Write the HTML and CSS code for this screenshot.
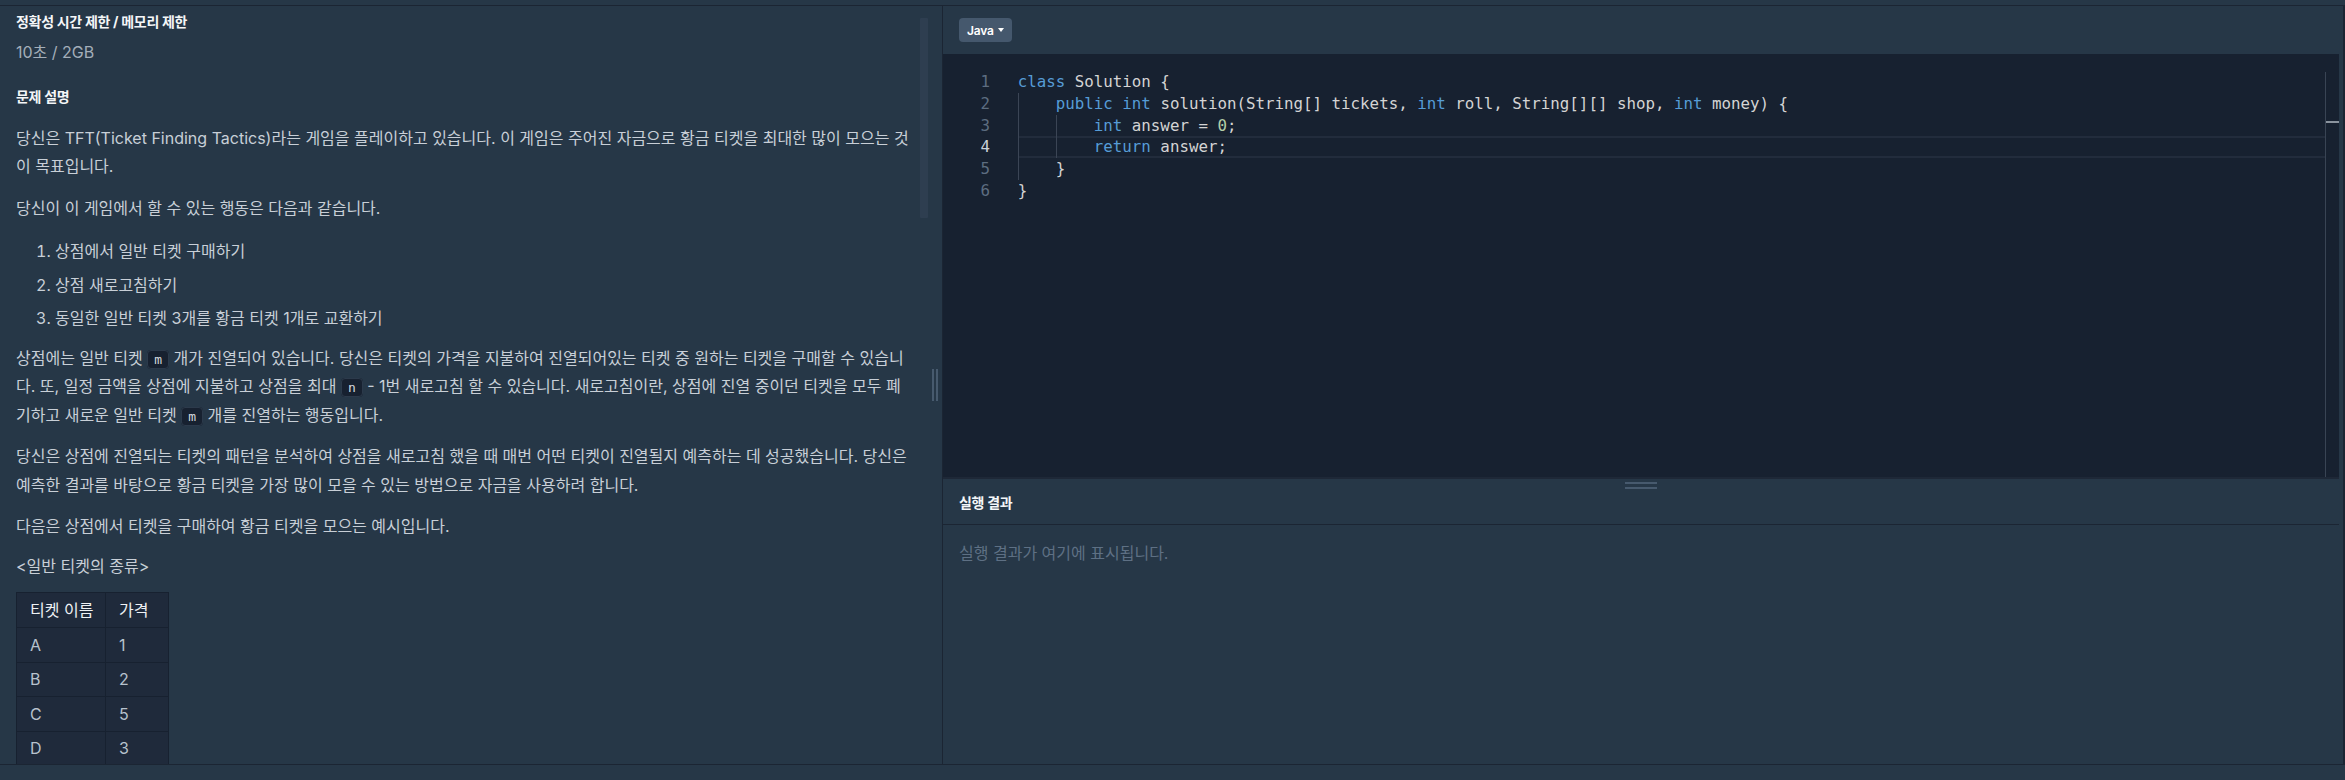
FILE: index.html
```html
<!DOCTYPE html>
<html lang="ko">
<head>
<meta charset="utf-8">
<title>TFT - 코딩테스트</title>
<link rel="stylesheet" href="styles.css">
</head>
<body>
<div class="app">
  <div class="topbar"></div>
  <main class="workspace">
    <section class="problem">
      <article class="problem-body">
        <h6 class="limit-title">정확성 시간 제한 / 메모리 제한</h6>
        <p class="limit-value">10초 / 2GB</p>
        <h5 class="section-title">문제 설명</h5>
        <div class="markdown">
          <p>당신은 TFT(Ticket Finding Tactics)라는 게임을 플레이하고 있습니다. 이 게임은 주어진 자금으로 황금 티켓을 최대한 많이 모으는 것이 목표입니다.</p>
          <p>당신이 이 게임에서 할 수 있는 행동은 다음과 같습니다.</p>
          <ol>
            <li>상점에서 일반 티켓 구매하기</li>
            <li>상점 새로고침하기</li>
            <li>동일한 일반 티켓 3개를 황금 티켓 1개로 교환하기</li>
          </ol>
          <p>상점에는 일반 티켓 <code>m</code> 개가 진열되어 있습니다. 당신은 티켓의 가격을 지불하여 진열되어있는 티켓 중 원하는 티켓을 구매할 수 있습니다. 또, 일정 금액을 상점에 지불하고 상점을 최대 <code>n</code> - 1번 새로고침 할 수 있습니다. 새로고침이란, 상점에 진열 중이던 티켓을 모두 폐기하고 새로운 일반 티켓 <code>m</code> 개를 진열하는 행동입니다.</p>
          <p>당신은 상점에 진열되는 티켓의 패턴을 분석하여 상점을 새로고침 했을 때 매번 어떤 티켓이 진열될지 예측하는 데 성공했습니다. 당신은 예측한 결과를 바탕으로 황금 티켓을 가장 많이 모을 수 있는 방법으로 자금을 사용하려 합니다.</p>
          <p>다음은 상점에서 티켓을 구매하여 황금 티켓을 모으는 예시입니다.</p>
          <p class="caption">&lt;일반 티켓의 종류&gt;</p>
          <table class="data-table">
            <colgroup><col class="col-name"><col class="col-price"></colgroup>
            <thead>
              <tr><th>티켓 이름</th><th>가격</th></tr>
            </thead>
            <tbody>
              <tr><td>A</td><td>1</td></tr>
              <tr><td>B</td><td>2</td></tr>
              <tr><td>C</td><td>5</td></tr>
              <tr><td>D</td><td>3</td></tr>
            </tbody>
          </table>
        </div>
      </article>
      <div class="scroll-track"><div class="scroll-thumb"></div></div>
    </section>

    <div class="split-gutter"><span class="split-grip"></span></div>

    <section class="ide">
      <div class="toolbar">
        <button class="lang-btn" type="button">Java<span class="caret"></span></button>
      </div>

      <div class="editor">
        <div class="line-numbers">
          <div>1</div>
          <div>2</div>
          <div>3</div>
          <div class="active">4</div>
          <div>5</div>
          <div>6</div>
        </div>
        <div class="code">
          <div class="line"><span class="kw">class</span> Solution {</div>
          <div class="line"><span class="ind">    </span><span class="kw">public</span> <span class="kw">int</span> solution(String[] tickets, <span class="kw">int</span> roll, String[][] shop, <span class="kw">int</span> money) {</div>
          <div class="line"><span class="ind">    </span><span class="ind">    </span><span class="kw">int</span> answer = <span class="num">0</span>;</div>
          <div class="line active"><span class="ind">    </span><span class="ind">    </span><span class="kw">return</span> answer;</div>
          <div class="line"><span class="ind">    </span>}</div>
          <div class="line">}</div>
        </div>
        <div class="ruler"><div class="ruler-mark"></div></div>
      </div>

      <div class="output">
        <span class="output-grip"></span>
        <div class="output-header">실행 결과</div>
        <div class="output-body">실행 결과가 여기에 표시됩니다.</div>
      </div>
    </section>
  </main>
  <footer class="statusbar"></footer>
</div>
</body>
</html>
```

FILE: styles.css
```css
* {
  box-sizing: border-box;
}

html, body {
  margin: 0;
  padding: 0;
}

body {
  background: #263747;
  font-family: Inter, "Noto Sans CJK KR", sans-serif;
  color: #c8cfd7;
}

.app {
  width: 2345px;
  height: 780px;
  display: flex;
  flex-direction: column;
  overflow: hidden;
}

.topbar {
  flex: none;
  height: 6px;
  border-bottom: 1px solid #1b2533;
}

.workspace {
  flex: none;
  height: 759px;
  display: flex;
  border-bottom: 1px solid #1b2533;
}

.statusbar {
  flex: none;
  height: 15px;
}

/* ---------- problem panel ---------- */

.problem {
  flex: none;
  width: 930px;
  display: flex;
  overflow: hidden;
}

.problem-body {
  flex: 1;
  min-width: 0;
  padding: 6px 4.5px 0 16px;
  overflow: hidden;
  font-size: 16px;
  line-height: 28.5px;
}

.limit-title,
.section-title {
  margin: 0;
  font-size: 14px;
  line-height: 20px;
  font-weight: 700;
  letter-spacing: -0.3px;
  color: #f4f6f8;
}

.limit-value {
  margin: 5.75px 0 0;
  color: #a3aeb9;
}

.section-title {
  margin-top: 20.25px;
}

.markdown {
  margin-top: 17.25px;
}

.markdown p {
  margin: 0 0 13px;
}

.markdown ol {
  margin: 15px 0 11px;
  padding-left: 39px;
}

.markdown li + li {
  margin-top: 5px;
}

.markdown code {
  font-family: "DejaVu Sans Mono", monospace;
  font-size: 13px;
  line-height: 16px;
  padding: 1px 6px;
  border-radius: 4px;
  background: #172130;
  border: 1px solid #2c3a4b;
  color: #d3d9df;
}

.markdown .caption {
  margin-top: -2px;
  margin-bottom: 11.75px;
}

.data-table {
  border-collapse: collapse;
  table-layout: fixed;
  width: 152px;
  background: #1f2a3b;
}

.col-name {
  width: 89px;
}

.col-price {
  width: 63px;
}

.data-table th,
.data-table td {
  border: 1px solid #172130;
  padding: 2.5px 8px 2.5px 13px;
  text-align: left;
  font-weight: 400;
  white-space: nowrap;
}

.data-table th {
  color: #eef1f4;
  padding-top: 3px;
}

.data-table td {
  color: #b7c2cd;
}

.scroll-track {
  flex: none;
  width: 12px;
  padding: 12px 2px 0;
}

.scroll-thumb {
  height: 200px;
  border-radius: 1px;
  background: #2e3e50;
}

/* ---------- split gutter ---------- */

.split-gutter {
  flex: none;
  width: 12px;
  display: flex;
  align-items: center;
  justify-content: center;
}

.split-grip {
  width: 6px;
  height: 32px;
  margin-right: 2px;
  border-left: 2px solid #475a6e;
  border-right: 2px solid #475a6e;
}

/* ---------- ide ---------- */

.ide {
  flex: 1;
  min-width: 0;
  display: flex;
  flex-direction: column;
  border-left: 1px solid #1b2533;
  border-right: 2px solid #1b2533;
  padding-right: 4px;
}

.toolbar {
  flex: none;
  height: 48px;
  padding: 12px 16px 0;
}

.lang-btn {
  display: inline-flex;
  align-items: center;
  gap: 4px;
  height: 24px;
  padding: 0 8px;
  border: 0;
  border-radius: 4px;
  background: #45586d;
  color: #ffffff;
  font-family: Inter, "Noto Sans CJK KR", sans-serif;
  font-size: 12px;
  font-weight: 600;
  letter-spacing: -0.2px;
}

.caret {
  width: 0;
  height: 0;
  border-left: 3px solid transparent;
  border-right: 3px solid transparent;
  border-top: 4px solid #ffffff;
}

.editor {
  flex: none;
  height: 423px;
  display: flex;
  background: #172130;
  font-family: "DejaVu Sans Mono", monospace;
  font-size: 15.8px;
  line-height: 21.9px;
}

.line-numbers {
  flex: none;
  width: 47px;
  padding-top: 16.75px;
  text-align: right;
  color: #5d6d80;
}

.line-numbers .active {
  color: #c9d1d9;
}

.code {
  flex: 1;
  min-width: 0;
  margin-left: 27.7px;
  padding-top: 16.75px;
  color: #d4d4d4;
}

.line {
  height: 21.9px;
  white-space: pre;
}

.line.active {
  box-shadow: inset 0 2px 0 #222c3c, inset 0 -2px 0 #222c3c;
}

.ind {
  display: inline-block;
  height: 21.9px;
  vertical-align: top;
  box-shadow: inset 1px 0 0 #3b4555;
}

.kw {
  color: #569cd6;
}

.num {
  color: #b5cea8;
}

.ruler {
  flex: none;
  width: 14px;
  margin-top: 18px;
  border-left: 1px solid #394454;
}

.ruler-mark {
  margin-top: 49px;
  height: 2px;
  background: #8a939e;
}

/* ---------- output ---------- */

.output {
  flex: 1;
  display: flex;
  flex-direction: column;
  position: relative;
  border-top: 2px solid #1e2837;
}

.output-grip {
  position: absolute;
  top: 3px;
  left: 50%;
  width: 32px;
  height: 7px;
  margin-left: -16px;
  border-top: 2px solid #475a6e;
  border-bottom: 2px solid #475a6e;
}

.output-header {
  flex: none;
  height: 46px;
  display: flex;
  align-items: center;
  padding-left: 16px;
  border-bottom: 1px solid #1b2533;
  font-size: 14px;
  font-weight: 700;
  letter-spacing: -0.3px;
  color: #f4f6f8;
}

.output-body {
  padding: 14px 16px;
  font-size: 16px;
  line-height: 28.5px;
  color: #5e7084;
}
```
